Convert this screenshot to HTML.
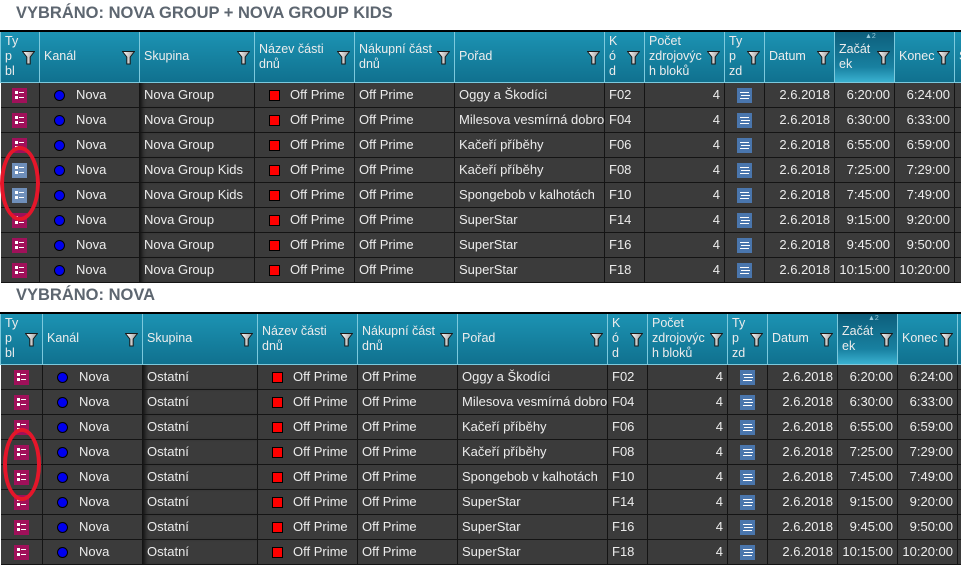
<!DOCTYPE html>
<html><head><meta charset="utf-8"><style>
*{margin:0;padding:0;box-sizing:border-box}
body{width:961px;height:567px;background:#fff;position:relative;overflow:hidden;font-family:"Liberation Sans","DejaVu Sans",sans-serif;}
.title{position:absolute;left:16px;font-size:16.5px;font-weight:bold;color:#5d6670;letter-spacing:0px}
table{position:absolute;border-collapse:collapse;table-layout:fixed;font-size:13px;color:#ececec;border-top:2px solid #000}
th{height:51px;background:linear-gradient(#1c93b3,#10718f);border:1px solid #7cc9dd;font-weight:normal;text-align:left;padding:0 17px 0 4px;position:relative;line-height:15px;vertical-align:middle;overflow:hidden;white-space:normal;font-size:12.5px}
th.s{background:linear-gradient(#0d5f7c,#1880a0 70%,#3ab1d0)}
th.s:before{content:"▲2";position:absolute;top:1px;left:30px;font-size:7px;color:#9cd;line-height:8px}
th .f{position:absolute;right:4px;top:50%;margin-top:-7px;width:13px;height:15px}
td{height:25px;background:#3b3b3b;border-right:1px solid #141414;border-bottom:1px solid #141414;padding:0 4px;white-space:nowrap;overflow:hidden}
td.r{text-align:right}
td.c{text-align:center}
td.sh{box-shadow:inset 5px 0 4px -3px #111}
.ti{display:inline-block;width:15px;height:15px;background:#a0105a;position:relative;vertical-align:middle}
.ti.b{background:#6f8fba}
.ti:before{content:"";position:absolute;left:3px;top:3px;width:3px;height:3px;background:#fff;box-shadow:0 5px 0 #fff}
.ti:after{content:"";position:absolute;left:7px;top:4px;width:5px;height:1px;background:#fff;box-shadow:0 5px 0 #fff}
.zd{display:inline-block;width:15px;height:15px;background:#4a76ad;position:relative;vertical-align:middle}
.zd:before{content:"";position:absolute;left:3px;top:4px;width:9px;height:1px;background:#fff;box-shadow:1px 3px 0 -0px #fff,0 6px 0 #fff}
.dot{display:inline-block;width:11px;height:11px;border-radius:50%;background:#0000ee;border:1px solid #000;vertical-align:middle;margin:0 11px 0 10px}
.sq{display:inline-block;width:11px;height:11px;background:#f00;border:1px solid #000;vertical-align:middle;margin:0 10px 0 10px}
.ell{position:absolute;border:4px solid #e5162a;border-radius:50%}
</style></head><body>
<svg width="0" height="0" style="position:absolute"><defs><linearGradient id="fg" x1="0" x2="1"><stop offset="0" stop-color="#fff"/><stop offset="1" stop-color="#999"/></linearGradient><symbol id="fl" viewBox="0 0 13 15"><path d="M0.5 1.5h12l-4.3 5.5v7h-3.4v-7z" fill="url(#fg)" stroke="#1a1a1a" stroke-width="1"/></symbol></defs></svg>

<div class="title" style="top:4px">VYBRÁNO: NOVA GROUP + NOVA GROUP KIDS</div>
<table style="left:0;top:30px;width:980px">
<colgroup><col style="width:39px"><col style="width:100px"><col style="width:115px"><col style="width:100px"><col style="width:100px"><col style="width:150px"><col style="width:40px"><col style="width:80px"><col style="width:40px"><col style="width:70px"><col style="width:60px"><col style="width:60px"><col style="width:26px"></colgroup>
<tr><th>Ty<br>p<br>bl<svg class="f"><use href="#fl"/></svg></th><th>Kanál<svg class="f"><use href="#fl"/></svg></th><th>Skupina<svg class="f"><use href="#fl"/></svg></th><th>Název části dnů<svg class="f"><use href="#fl"/></svg></th><th>Nákupní část dnů<svg class="f"><use href="#fl"/></svg></th><th>Pořad<svg class="f"><use href="#fl"/></svg></th><th>K<br>ó<br>d<svg class="f"><use href="#fl"/></svg></th><th>Počet zdrojovýc h bloků<svg class="f"><use href="#fl"/></svg></th><th>Ty<br>p<br>zd<svg class="f"><use href="#fl"/></svg></th><th>Datum<svg class="f"><use href="#fl"/></svg></th><th class="s">Začát ek<svg class="f"><use href="#fl"/></svg></th><th>Konec<svg class="f"><use href="#fl"/></svg></th><th>S</th></tr>
<tr><td class="c"><span class="ti"></span></td><td><span class="dot"></span>Nova</td><td class="sh">Nova Group</td><td><span class="sq"></span>Off Prime</td><td>Off Prime</td><td>Oggy a Škodíci</td><td>F02</td><td class="r">4</td><td class="c"><span class="zd"></span></td><td class="r">2.6.2018</td><td class="r">6:20:00</td><td class="r">6:24:00</td><td></td></tr>
<tr><td class="c"><span class="ti"></span></td><td><span class="dot"></span>Nova</td><td class="sh">Nova Group</td><td><span class="sq"></span>Off Prime</td><td>Off Prime</td><td>Milesova vesmírná dobrodr</td><td>F04</td><td class="r">4</td><td class="c"><span class="zd"></span></td><td class="r">2.6.2018</td><td class="r">6:30:00</td><td class="r">6:33:00</td><td></td></tr>
<tr><td class="c"><span class="ti"></span></td><td><span class="dot"></span>Nova</td><td class="sh">Nova Group</td><td><span class="sq"></span>Off Prime</td><td>Off Prime</td><td>Kačeří příběhy</td><td>F06</td><td class="r">4</td><td class="c"><span class="zd"></span></td><td class="r">2.6.2018</td><td class="r">6:55:00</td><td class="r">6:59:00</td><td></td></tr>
<tr><td class="c"><span class="ti b"></span></td><td><span class="dot"></span>Nova</td><td class="sh">Nova Group Kids</td><td><span class="sq"></span>Off Prime</td><td>Off Prime</td><td>Kačeří příběhy</td><td>F08</td><td class="r">4</td><td class="c"><span class="zd"></span></td><td class="r">2.6.2018</td><td class="r">7:25:00</td><td class="r">7:29:00</td><td></td></tr>
<tr><td class="c"><span class="ti b"></span></td><td><span class="dot"></span>Nova</td><td class="sh">Nova Group Kids</td><td><span class="sq"></span>Off Prime</td><td>Off Prime</td><td>Spongebob v kalhotách</td><td>F10</td><td class="r">4</td><td class="c"><span class="zd"></span></td><td class="r">2.6.2018</td><td class="r">7:45:00</td><td class="r">7:49:00</td><td></td></tr>
<tr><td class="c"><span class="ti"></span></td><td><span class="dot"></span>Nova</td><td class="sh">Nova Group</td><td><span class="sq"></span>Off Prime</td><td>Off Prime</td><td>SuperStar</td><td>F14</td><td class="r">4</td><td class="c"><span class="zd"></span></td><td class="r">2.6.2018</td><td class="r">9:15:00</td><td class="r">9:20:00</td><td></td></tr>
<tr><td class="c"><span class="ti"></span></td><td><span class="dot"></span>Nova</td><td class="sh">Nova Group</td><td><span class="sq"></span>Off Prime</td><td>Off Prime</td><td>SuperStar</td><td>F16</td><td class="r">4</td><td class="c"><span class="zd"></span></td><td class="r">2.6.2018</td><td class="r">9:45:00</td><td class="r">9:50:00</td><td></td></tr>
<tr><td class="c"><span class="ti"></span></td><td><span class="dot"></span>Nova</td><td class="sh">Nova Group</td><td><span class="sq"></span>Off Prime</td><td>Off Prime</td><td>SuperStar</td><td>F18</td><td class="r">4</td><td class="c"><span class="zd"></span></td><td class="r">2.6.2018</td><td class="r">10:15:00</td><td class="r">10:20:00</td><td></td></tr>
</table>
<div style="position:absolute;left:0;top:284px;width:961px;height:28px;background:#fff"></div>
<div class="title" style="top:286px">VYBRÁNO: NOVA</div>
<table style="left:0;top:312px;width:983px">
<colgroup><col style="width:42px"><col style="width:100px"><col style="width:115px"><col style="width:100px"><col style="width:100px"><col style="width:150px"><col style="width:40px"><col style="width:80px"><col style="width:40px"><col style="width:70px"><col style="width:60px"><col style="width:60px"><col style="width:26px"></colgroup>
<tr><th>Ty<br>p<br>bl<svg class="f"><use href="#fl"/></svg></th><th>Kanál<svg class="f"><use href="#fl"/></svg></th><th>Skupina<svg class="f"><use href="#fl"/></svg></th><th>Název části dnů<svg class="f"><use href="#fl"/></svg></th><th>Nákupní část dnů<svg class="f"><use href="#fl"/></svg></th><th>Pořad<svg class="f"><use href="#fl"/></svg></th><th>K<br>ó<br>d<svg class="f"><use href="#fl"/></svg></th><th>Počet zdrojovýc h bloků<svg class="f"><use href="#fl"/></svg></th><th>Ty<br>p<br>zd<svg class="f"><use href="#fl"/></svg></th><th>Datum<svg class="f"><use href="#fl"/></svg></th><th class="s">Začát ek<svg class="f"><use href="#fl"/></svg></th><th>Konec<svg class="f"><use href="#fl"/></svg></th><th>S</th></tr>
<tr><td class="c"><span class="ti"></span></td><td><span class="dot"></span>Nova</td><td class="sh">Ostatní</td><td><span class="sq"></span>Off Prime</td><td>Off Prime</td><td>Oggy a Škodíci</td><td>F02</td><td class="r">4</td><td class="c"><span class="zd"></span></td><td class="r">2.6.2018</td><td class="r">6:20:00</td><td class="r">6:24:00</td><td></td></tr>
<tr><td class="c"><span class="ti"></span></td><td><span class="dot"></span>Nova</td><td class="sh">Ostatní</td><td><span class="sq"></span>Off Prime</td><td>Off Prime</td><td>Milesova vesmírná dobrodr</td><td>F04</td><td class="r">4</td><td class="c"><span class="zd"></span></td><td class="r">2.6.2018</td><td class="r">6:30:00</td><td class="r">6:33:00</td><td></td></tr>
<tr><td class="c"><span class="ti"></span></td><td><span class="dot"></span>Nova</td><td class="sh">Ostatní</td><td><span class="sq"></span>Off Prime</td><td>Off Prime</td><td>Kačeří příběhy</td><td>F06</td><td class="r">4</td><td class="c"><span class="zd"></span></td><td class="r">2.6.2018</td><td class="r">6:55:00</td><td class="r">6:59:00</td><td></td></tr>
<tr><td class="c"><span class="ti"></span></td><td><span class="dot"></span>Nova</td><td class="sh">Ostatní</td><td><span class="sq"></span>Off Prime</td><td>Off Prime</td><td>Kačeří příběhy</td><td>F08</td><td class="r">4</td><td class="c"><span class="zd"></span></td><td class="r">2.6.2018</td><td class="r">7:25:00</td><td class="r">7:29:00</td><td></td></tr>
<tr><td class="c"><span class="ti"></span></td><td><span class="dot"></span>Nova</td><td class="sh">Ostatní</td><td><span class="sq"></span>Off Prime</td><td>Off Prime</td><td>Spongebob v kalhotách</td><td>F10</td><td class="r">4</td><td class="c"><span class="zd"></span></td><td class="r">2.6.2018</td><td class="r">7:45:00</td><td class="r">7:49:00</td><td></td></tr>
<tr><td class="c"><span class="ti"></span></td><td><span class="dot"></span>Nova</td><td class="sh">Ostatní</td><td><span class="sq"></span>Off Prime</td><td>Off Prime</td><td>SuperStar</td><td>F14</td><td class="r">4</td><td class="c"><span class="zd"></span></td><td class="r">2.6.2018</td><td class="r">9:15:00</td><td class="r">9:20:00</td><td></td></tr>
<tr><td class="c"><span class="ti"></span></td><td><span class="dot"></span>Nova</td><td class="sh">Ostatní</td><td><span class="sq"></span>Off Prime</td><td>Off Prime</td><td>SuperStar</td><td>F16</td><td class="r">4</td><td class="c"><span class="zd"></span></td><td class="r">2.6.2018</td><td class="r">9:45:00</td><td class="r">9:50:00</td><td></td></tr>
<tr><td class="c"><span class="ti"></span></td><td><span class="dot"></span>Nova</td><td class="sh">Ostatní</td><td><span class="sq"></span>Off Prime</td><td>Off Prime</td><td>SuperStar</td><td>F18</td><td class="r">4</td><td class="c"><span class="zd"></span></td><td class="r">2.6.2018</td><td class="r">10:15:00</td><td class="r">10:20:00</td><td></td></tr>
</table>
<div class="ell" style="left:0;top:146px;width:40px;height:75px"></div>
<div class="ell" style="left:3px;top:428px;width:38px;height:73px"></div>
</body></html>
